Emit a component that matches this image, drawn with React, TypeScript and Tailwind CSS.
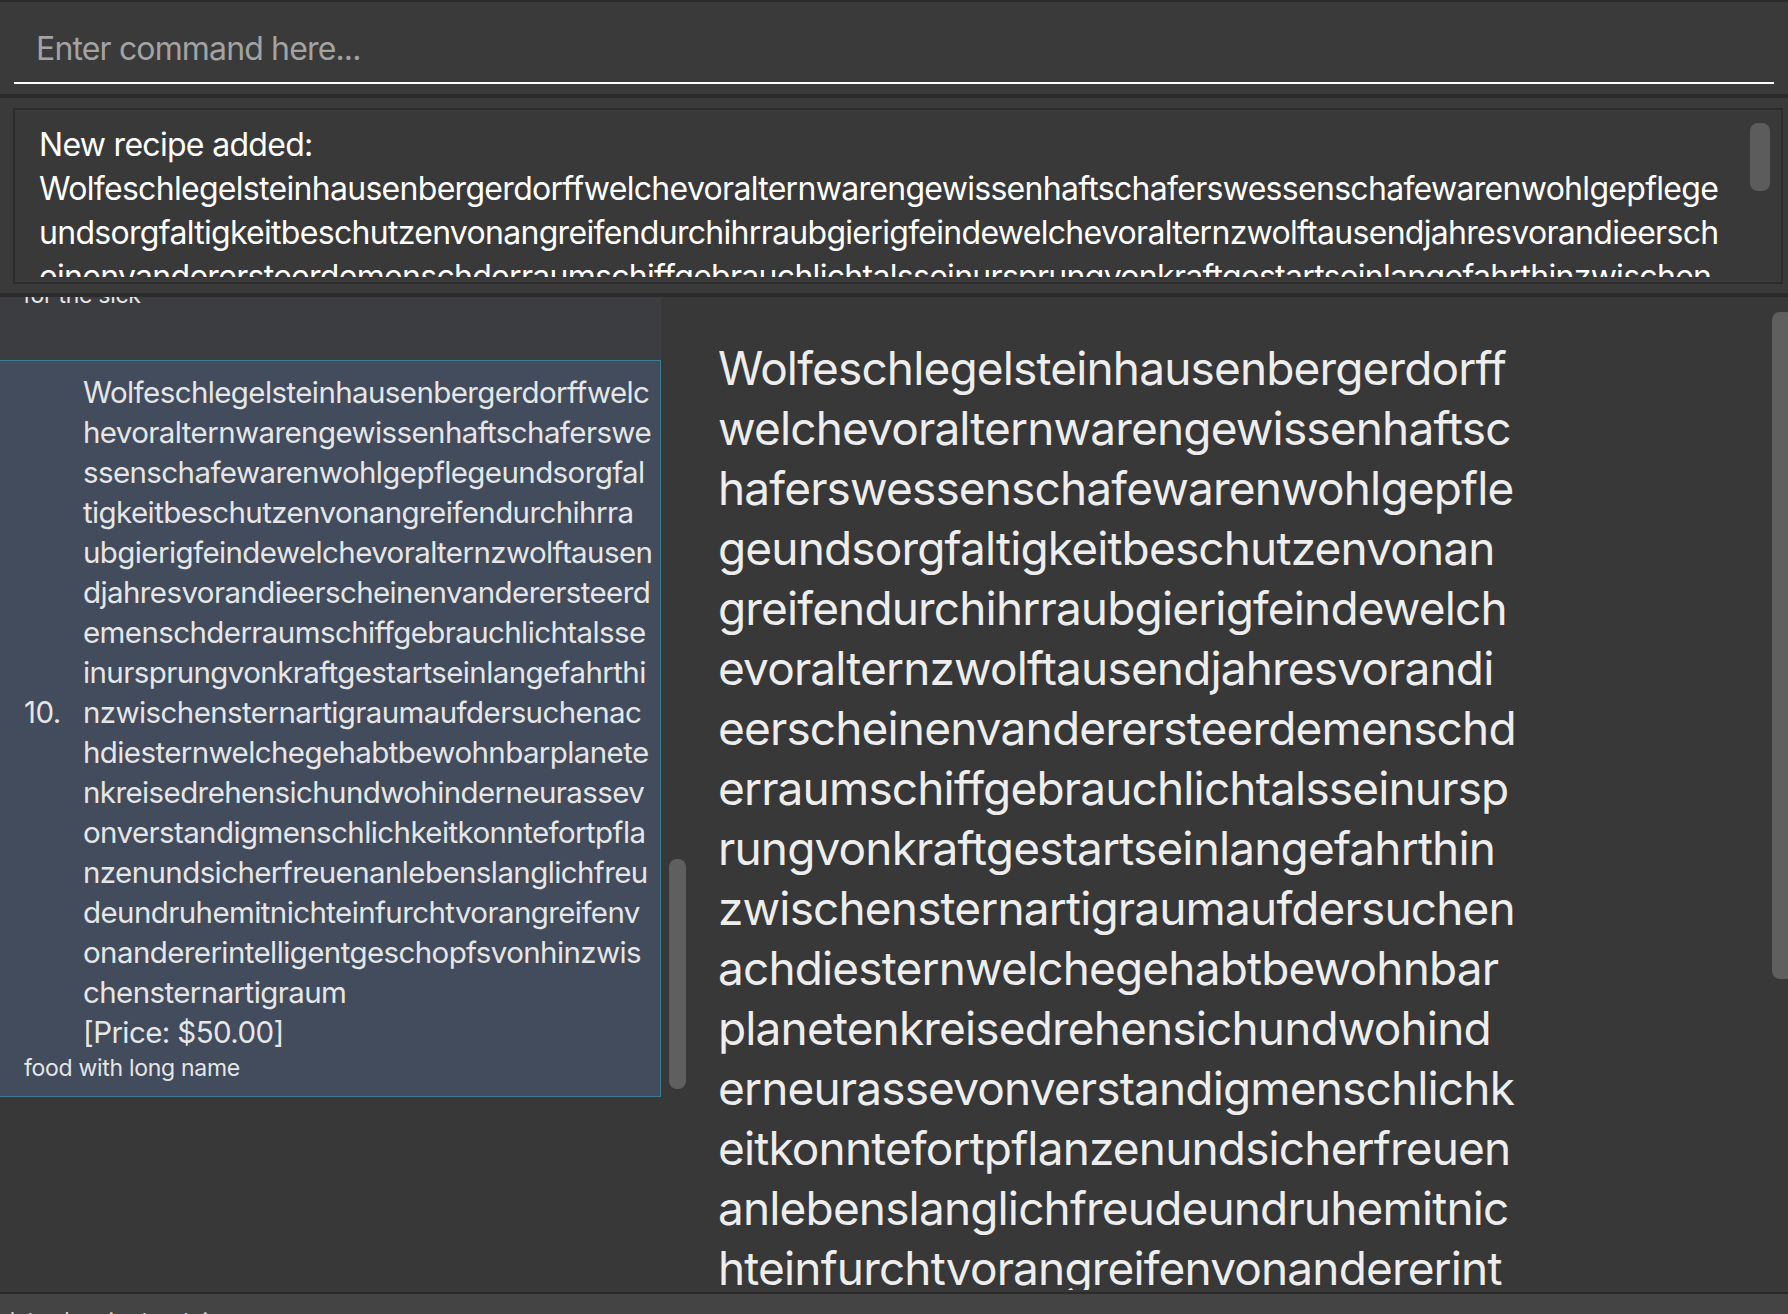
import React from "react";

const cardLines = [
  "Wolfeschlegelsteinhausenbergerdorffwelc",
  "hevoralternwarengewissenhaftschaferswe",
  "ssenschafewarenwohlgepflegeundsorgfal",
  "tigkeitbeschutzenvonangreifendurchihrra",
  "ubgierigfeindewelchevoralternzwolftausen",
  "djahresvorandieerscheinenvanderersteerd",
  "emenschderraumschiffgebrauchlichtalsse",
  "inursprungvonkraftgestartseinlangefahrthi",
  "nzwischensternartigraumaufdersuchenac",
  "hdiesternwelchegehabtbewohnbarplanete",
  "nkreisedrehensichundwohinderneurassev",
  "onverstandigmenschlichkeitkonntefortpfla",
  "nzenundsicherfreuenanlebenslanglichfreu",
  "deundruhemitnichteinfurchtvorangreifenv",
  "onandererintelligentgeschopfsvonhinzwis",
  "chensternartigraum",
  "[Price: $50.00]",
];

const detailLines = [
  "Wolfeschlegelsteinhausenbergerdorff",
  "welchevoralternwarengewissenhaftsc",
  "haferswessenschafewarenwohlgepfle",
  "geundsorgfaltigkeitbeschutzenvonan",
  "greifendurchihrraubgierigfeindewelch",
  "evoralternzwolftausendjahresvorandi",
  "eerscheinenvanderersteerdemenschd",
  "erraumschiffgebrauchlichtalsseinursp",
  "rungvonkraftgestartseinlangefahrthin",
  "zwischensternartigraumaufdersuchen",
  "achdiesternwelchegehabtbewohnbar",
  "planetenkreisedrehensichundwohind",
  "erneurassevonverstandigmenschlichk",
  "eitkonntefortpflanzenundsicherfreuen",
  "anlebenslanglichfreudeundruhemitnic",
  "hteinfurchtvorangreifenvonandererint",
];

const resultLines = [
  "New recipe added:",
  "Wolfeschlegelsteinhausenbergerdorffwelchevoralternwarengewissenhaftschaferswessenschafewarenwohlgepflege",
  "undsorgfaltigkeitbeschutzenvonangreifendurchihrraubgierigfeindewelchevoralternzwolftausendjahresvorandieersch",
  "einenvanderersteerdemenschderraumschiffgebrauchlichtalsseinursprungvonkraftgestartseinlangefahrthinzwischen",
];

export default function App() {
  return (
    <div className="w-[1788px] h-[1314px] bg-[#2b2b2b] flex flex-col overflow-hidden font-['Inter','Noto_Sans',sans-serif]">
      {/* Command box */}
      <div className="mt-[2px] h-[92px] bg-[#3a3a3a] px-[14px] shrink-0">
        <div className="h-[82px] border-b-2 border-white pt-[27px] pl-[22px]">
          <div className="text-[32px] leading-[40px] tracking-[-0.85px] text-[#a3a3a3] whitespace-pre">Enter command here...</div>
        </div>
      </div>

      {/* Result display */}
      <div className="mt-[4px] h-[195px] bg-[#3a3a3a] pl-[13px] pr-[5px] pt-[10px] shrink-0">
        <div className="relative h-[176px] border-2 border-[#2c2c2c] bg-[#393939] pl-[24px]">
          <div className="mt-[13px] h-[154px] overflow-hidden">
            {resultLines.map((l, i) => (
              <div key={i} className="text-[32px] leading-[44px] tracking-[-0.7px] text-white whitespace-pre">
                {l}
              </div>
            ))}
          </div>
          <div className="absolute right-[11px] top-[13px] w-[20px] h-[68px] rounded-[8px] bg-[#5c5c5c]" />
        </div>
      </div>

      {/* Main area */}
      <div className="mt-[4px] h-[995px] flex shrink-0">
        {/* List panel */}
        <div className="relative w-[690px] bg-[#383838] overflow-hidden shrink-0">
          <div className="w-[661px] h-[63px] bg-[#3c3d40] overflow-hidden">
            <div className="-mt-[16px] pl-[23px] text-[23px] leading-[28px] tracking-[-0.3px] text-[#e6e6e6] whitespace-pre">for the sick</div>
          </div>
          <div className="w-[661px] h-[737px] border border-l-0 border-[#3d7d93] bg-[#424c5d] pt-[11px] flex flex-col">
            <div className="flex items-center">
              <div className="w-[83px] pl-[24px] text-[29.5px] leading-[40px] tracking-[-0.6px] text-[#e6e6e6] whitespace-pre">10.</div>
              <div className="flex flex-col">
                {cardLines.map((l, i) => (
                  <div key={i} className="text-[29.5px] leading-[40px] tracking-[-0.6px] text-[#e6e6e6] whitespace-pre">
                    {l}
                  </div>
                ))}
              </div>
            </div>
            <div className="mt-[2px] pl-[24px] text-[23px] leading-[28px] tracking-[-0.3px] text-[#e6e6e6] whitespace-pre">food with long name</div>
          </div>
          <div className="absolute left-[669px] top-[562px] w-[17px] h-[230px] rounded-[8px] bg-[#5f5f5f]" />
        </div>

        {/* Detail panel */}
        <div className="relative flex-1 bg-[#383838] overflow-hidden pl-[28px]">
          <div className="mt-[41px] h-[952px] overflow-hidden">
            {detailLines.map((l, i) => (
              <div key={i} className="text-[46px] leading-[60px] tracking-[-0.85px] text-[#ededed] whitespace-pre">
                {l}
              </div>
            ))}
          </div>
          <div className="absolute left-[1082px] top-[15px] w-[22px] h-[667px] rounded-[8px] bg-[#5f5f5f]" />
        </div>
      </div>

      {/* Status bar */}
      <div className="mt-[2px] h-[20px] bg-[#444444] overflow-hidden shrink-0">
        <div className="pt-[14px] pl-[4px] text-[23px] leading-[28px] text-[#dcdcdc] whitespace-pre">.\data\recipebook.json</div>
      </div>
    </div>
  );
}
